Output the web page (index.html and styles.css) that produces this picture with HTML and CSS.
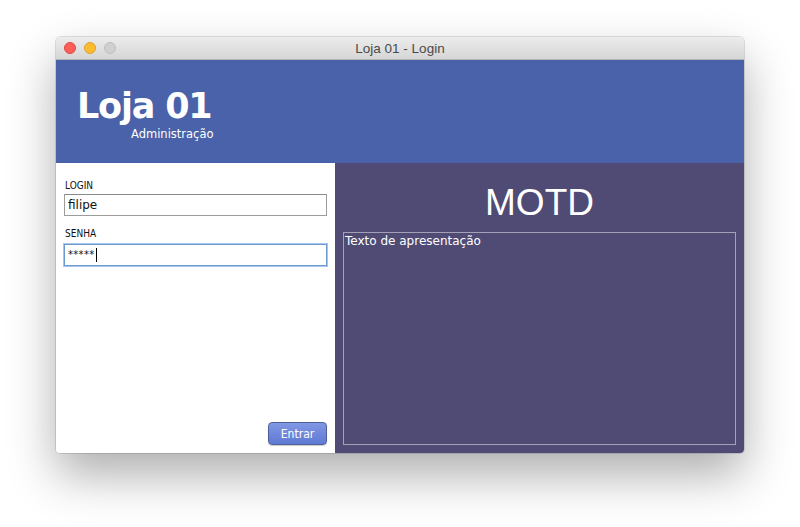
FILE: index.html
```html
<!DOCTYPE html>
<html lang="pt">
<head>
<meta charset="utf-8">
<title>Loja 01 - Login</title>
<link rel="stylesheet" href="styles.css">
</head>
<body>
<div class="window">
  <div class="titlebar">
    <div class="lights">
      <span class="light red"></span>
      <span class="light yellow"></span>
      <span class="light gray"></span>
    </div>
    <div class="wtitle">Loja 01 - Login</div>
  </div>
  <div class="header">
    <div class="brand">Loja 01</div>
    <div class="sub">Administração</div>
  </div>
  <div class="content">
    <div class="left">
      <label class="lbl">LOGIN</label>
      <div class="input">filipe</div>
      <label class="lbl lbl2">SENHA</label>
      <div class="input focus">*****<span class="caret"></span></div>
      <div class="spacer"></div>
      <div class="actions"><button class="btn">Entrar</button></div>
    </div>
    <div class="right">
      <div class="motd">MOTD</div>
      <div class="textarea">Texto de apresentação</div>
    </div>
  </div>
</div>
</body>
</html>
```

FILE: styles.css
```css
html, body {
  margin: 0;
  padding: 0;
  background: #ffffff;
  width: 800px;
  height: 527px;
  overflow: hidden;
}
body {
  display: flex;
  justify-content: center;
  padding-top: 37px;
  box-sizing: border-box;
  font-family: "DejaVu Sans", sans-serif;
}
.window {
  width: 688px;
  height: 416px;
  display: flex;
  flex-direction: column;
  border-radius: 5px 5px 4px 4px;
  overflow: hidden;
  box-shadow: 0 22px 48px rgba(0,0,0,0.32), 0 0 0 1px rgba(0,0,0,0.12);
}
.titlebar {
  height: 22px;
  flex: 0 0 22px;
  position: relative;
  background: linear-gradient(#ececec, #d6d6d6);
  border-bottom: 1px solid #b4b4b4;
  display: flex;
  align-items: center;
  justify-content: center;
}
.lights {
  position: absolute;
  left: 8px;
  top: 5px;
  display: flex;
  gap: 8px;
}
.light {
  width: 12px;
  height: 12px;
  border-radius: 50%;
  box-sizing: border-box;
}
.red { background: #fc5f57; border: 1px solid #df4744; }
.yellow { background: #fdbc2e; border: 1px solid #de9f34; }
.gray { background: #d0d0d0; border: 1px solid #bdbdbd; }
.wtitle {
  font-family: "Liberation Sans", sans-serif;
  font-size: 13.5px;
  color: #4a4a4a;
  padding-top: 1px;
}
.header {
  flex: 0 0 103px;
  background: #4a62a9;
  color: #fff;
  padding-left: 21px;
  box-sizing: border-box;
}
.brand {
  font-family: "DejaVu Sans", sans-serif;
  font-weight: bold;
  font-size: 35px;
  letter-spacing: -1.2px;
  line-height: 40px;
  margin-top: 26px;
}
.sub {
  font-size: 11.5px;
  margin-left: 54px;
  line-height: 14px;
  margin-top: 1px;
}
.content {
  flex: 1;
  display: flex;
}
.left {
  width: 279px;
  background: #fff;
  display: flex;
  flex-direction: column;
  padding: 17px 8px 8px 8px;
  box-sizing: border-box;
}
.lbl {
  font-family: "DejaVu Sans Condensed", "DejaVu Sans", sans-serif;
  font-size: 10px;
  color: #111;
  line-height: 12px;
  padding-left: 1px;
}
.lbl2 { margin-top: 12px; }
.input {
  height: 22px;
  margin-top: 2px;
  box-sizing: border-box;
  border: 1px solid #9c9c9c;
  border-top-color: #8a8a8a;
  font-size: 12px;
  color: #111;
  line-height: 20px;
  padding-left: 3px;
  display: flex;
  align-items: center;
}
.input.focus {
  border: 1px solid #6c9bd2;
  box-shadow: 0 0 0 1px #a9c6ea;
  font-size: 10px;
  letter-spacing: 0.3px;
  margin-top: 4px;
  height: 22px;
}
.caret {
  display: inline-block;
  width: 1px;
  height: 14px;
  background: #000;
  margin-left: 1px;
}
.spacer { flex: 1; }
.actions {
  display: flex;
  justify-content: flex-end;
}
.btn {
  width: 59px;
  height: 23px;
  margin-right: 0;
  border-radius: 4px;
  border: 1px solid #4f5f9c;
  background: linear-gradient(#8198e4, #6079d3);
  color: #fff;
  font-family: "DejaVu Sans Condensed", "DejaVu Sans", sans-serif;
  font-size: 12px;
  padding: 0;
  box-shadow: 0 1px 1px rgba(0,0,0,0.2);
}
.right {
  flex: 1;
  background: #4f4b75;
  display: flex;
  flex-direction: column;
  padding: 0 8px 8px 8px;
  box-sizing: border-box;
}
.motd {
  font-family: "Liberation Sans", sans-serif;
  font-size: 37px;
  color: #fff;
  text-align: center;
  line-height: 40px;
  margin-top: 20px;
  height: 49px;
}
.textarea {
  flex: 1;
  border: 1px solid #a3a1b8;
  color: #fff;
  font-size: 12px;
  line-height: 15px;
  padding: 1px 1px;
}
```
